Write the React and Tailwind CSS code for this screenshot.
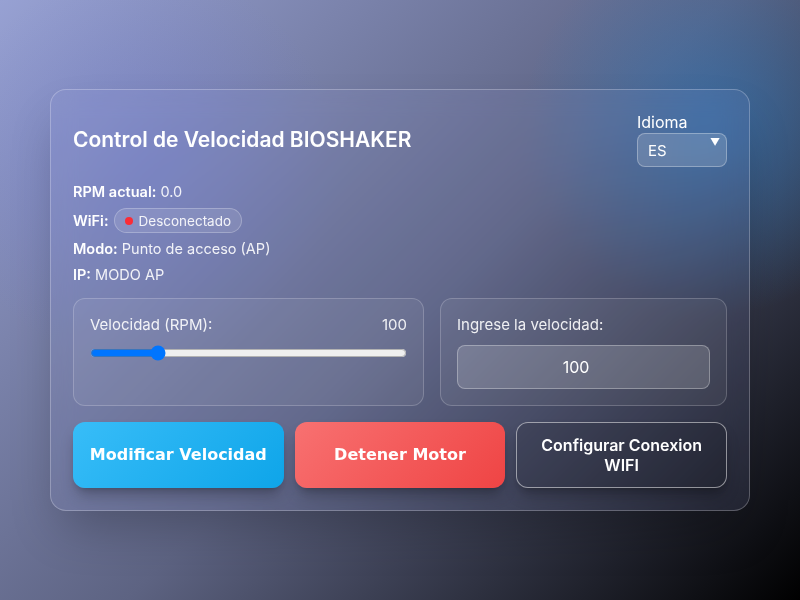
import React, { useState } from "react";

const App = () => {
  const [speed, setSpeed] = useState(100);
  const [lang, setLang] = useState("ES");

  return (
    <div className="min-h-screen w-full flex items-center justify-center bg-[radial-gradient(circle_at_89%_21%,rgba(40,125,200,0.55)_0px,rgba(40,125,200,0)_190px),radial-gradient(circle_at_18%_28%,rgba(105,118,225,0.3)_0px,rgba(105,118,225,0)_200px),linear-gradient(135deg,#97a1d3_0%,#5d6382_52%,#000_100%)] font-['Inter',sans-serif] text-white">
      <div className="w-[700px] rounded-2xl border border-white/25 bg-[#a0a8f0]/10 backdrop-blur-md shadow-2xl px-[22px] pt-[22px] pb-[22px]">
        {/* Header */}
        <div className="flex items-center justify-between">
          <h1 className="text-[21px] font-semibold leading-7 mt-[1px]">
            Control de Velocidad BIOSHAKER
          </h1>
          <div className="w-[90px]">
            <label className="block text-base leading-5 mb-[1px]">Idioma</label>
            <div className="relative">
              <select
                value={lang}
                onChange={(e) => setLang(e.target.value)}
                className="appearance-none w-full h-[34px] rounded-lg border border-white/30 bg-white/15 pl-[10px] pt-[3px] text-[15px] text-white outline-none"
              >
                <option value="ES">ES</option>
                <option value="EN">EN</option>
              </select>
              <span className="absolute right-[7px] top-[2px] text-[10px] pointer-events-none">▼</span>
            </div>
          </div>
        </div>

        {/* Status */}
        <div className="mt-[15px] flex flex-col gap-[6px] text-[14.5px] leading-5 text-white/90">
          <p>
            <span className="font-semibold text-white">RPM actual:</span> 0.0
          </p>
          <div className="flex items-center gap-[5px]">
            <span className="font-semibold text-white">WiFi:</span>
            <span className="flex items-center gap-[6px] h-[25px] rounded-full border border-white/25 bg-white/10 pl-[10px] pr-[10px] text-[13.5px]">
              <span className="w-2 h-2 rounded-full bg-red-500"></span>
              Desconectado
            </span>
          </div>
          <p>
            <span className="font-semibold text-white">Modo:</span> Punto de acceso (AP)
          </p>
          <p>
            <span className="font-semibold text-white">IP:</span> MODO AP
          </p>
        </div>

        {/* Controls */}
        <div className="mt-[13px] grid grid-cols-[351px_1fr] gap-4">
          <div className="h-[108px] rounded-xl border border-white/20 bg-white/5 px-[16px] pt-[16px]">
            <div className="flex justify-between text-[15px] leading-5 text-white/90">
              <span>Velocidad (RPM):</span>
              <span>{speed}</span>
            </div>
            <input
              type="range"
              min="0"
              max="500"
              value={speed}
              onChange={(e) => setSpeed(Number(e.target.value))}
              className="mt-[10px] block w-full h-4"
            />
          </div>
          <div className="h-[108px] rounded-xl border border-white/20 bg-white/5 px-[16px] pt-[16px]">
            <label className="block text-[15px] leading-5 text-white/90">
              Ingrese la velocidad:
            </label>
            <input
              type="number"
              value={speed}
              onChange={(e) => setSpeed(Number(e.target.value))}
              className="mt-[10px] block w-full h-[44px] rounded-lg border border-white/30 bg-white/15 text-center text-base text-white outline-none [appearance:textfield]"
            />
          </div>
        </div>

        {/* Buttons */}
        <div className="mt-[16px] grid grid-cols-3 gap-[11px]">
          <button className="h-[66px] rounded-xl bg-[linear-gradient(135deg,#38bdf8,#0ea5e9)] shadow-lg shadow-black/25 font-['DejaVu_Sans',sans-serif] font-bold text-[16px] text-white">
            Modificar Velocidad
          </button>
          <button className="h-[66px] rounded-xl bg-[linear-gradient(135deg,#f87171,#ef4444)] shadow-lg shadow-black/25 font-['DejaVu_Sans',sans-serif] font-bold text-[16px] text-white">
            Detener Motor
          </button>
          <button className="h-[66px] rounded-xl border border-white/50 bg-black/10 shadow-lg shadow-black/25 px-4 text-[16px] leading-5 font-semibold text-white">
            Configurar Conexion WIFI
          </button>
        </div>
      </div>
    </div>
  );
};

export default App;
